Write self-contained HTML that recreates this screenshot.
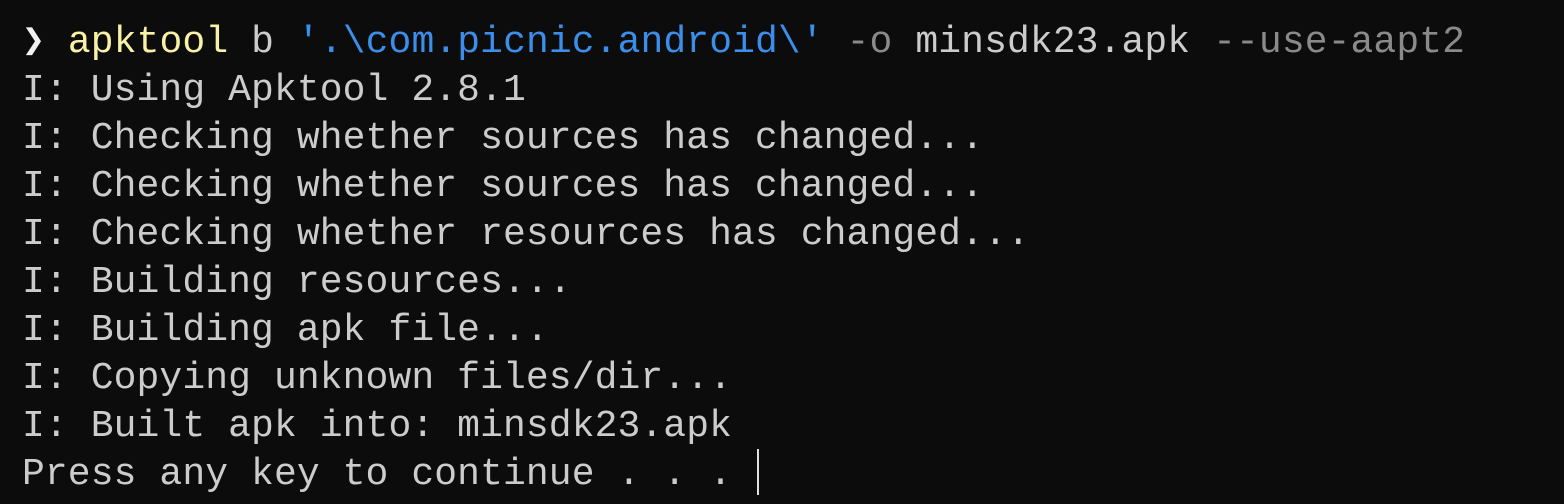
<!DOCTYPE html>
<html><head><meta charset="utf-8"><style>
html,body{margin:0;padding:0;background:#0c0c0c;width:1564px;height:504px;overflow:hidden}
pre{margin:0;position:absolute;left:22px;top:19px;font-family:"Liberation Mono","DejaVu Sans Mono",monospace;font-size:38px;line-height:48px;color:#cccccc;letter-spacing:0.1px}
.y{color:#f9f1a5}.b{color:#3b8eea}.g{color:#8a8a8a}.w{color:#f2f2f2}
.cur{position:absolute;left:757px;top:449px;width:2px;height:46px;background:#e0e0e0}
</style></head><body>
<pre><span class="w">❯</span> <span class="y">apktool</span> b <span class="b">'.\com.picnic.android\'</span> <span class="g">-o</span> minsdk23.apk <span class="g">--use-aapt2</span>
I: Using Apktool 2.8.1
I: Checking whether sources has changed...
I: Checking whether sources has changed...
I: Checking whether resources has changed...
I: Building resources...
I: Building apk file...
I: Copying unknown files/dir...
I: Built apk into: minsdk23.apk
Press any key to continue . . .</pre>
<div class="cur"></div>
</body></html>
